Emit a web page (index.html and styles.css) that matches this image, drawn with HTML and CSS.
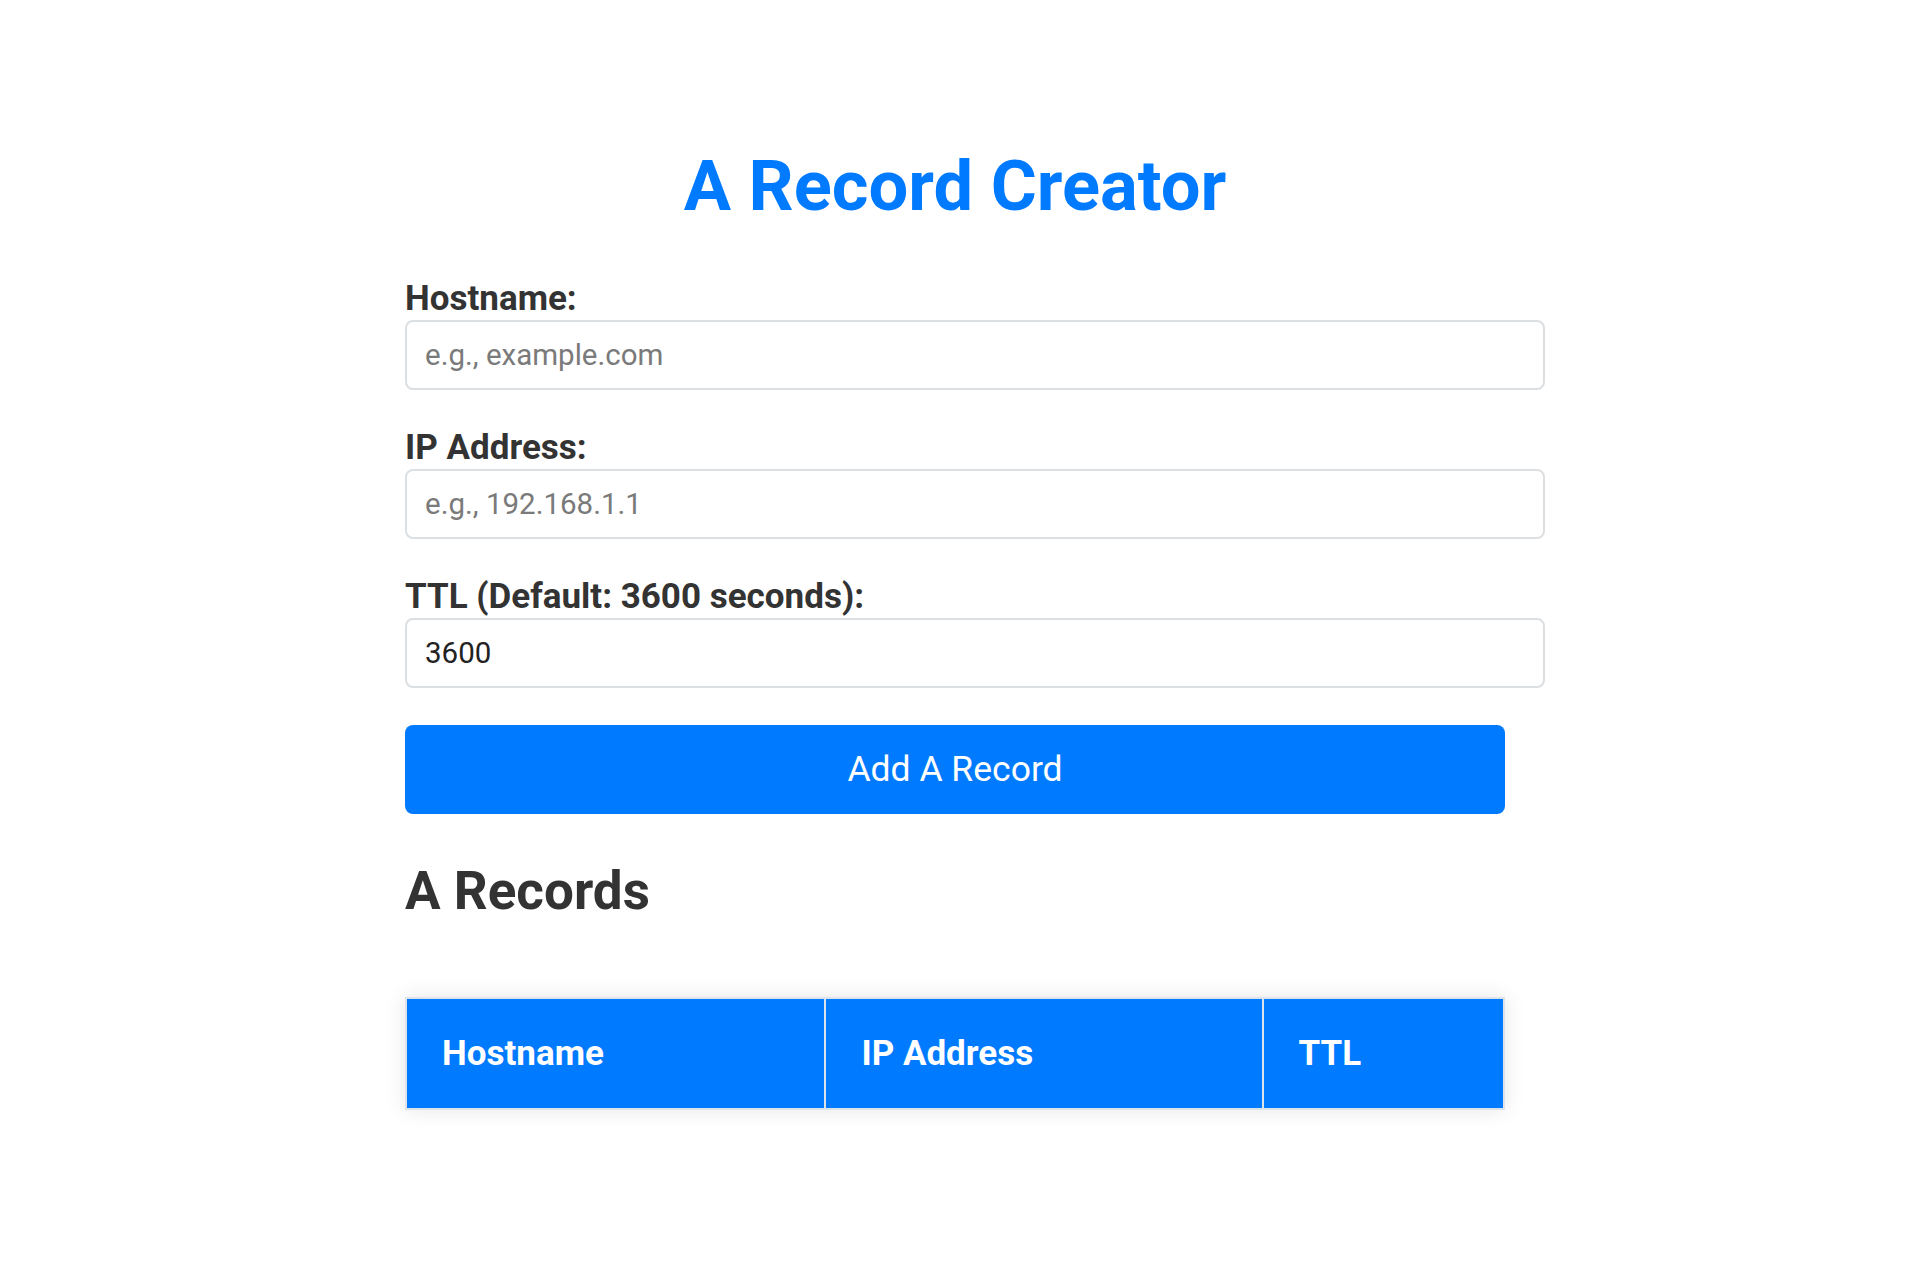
FILE: index.html
```html
<!DOCTYPE html>
<html lang="en">
<head>
<meta charset="utf-8">
<title>A Record Creator</title>
<link rel="stylesheet" href="styles.css">
</head>
<body>
<div class="container">
  <h1 class="title">A Record Creator</h1>
  <form class="record-form">
    <label class="field-label" for="hostname">Hostname:</label>
    <input class="field-input" type="text" id="hostname" placeholder="e.g., example.com">
    <label class="field-label" for="ip">IP Address:</label>
    <input class="field-input" type="text" id="ip" placeholder="e.g., 192.168.1.1">
    <label class="field-label" for="ttl">TTL (Default: 3600 seconds):</label>
    <input class="field-input field-last" type="number" id="ttl" value="3600">
    <button class="add-btn" type="button">Add A Record</button>
  </form>
  <h2 class="section-title">A Records</h2>
  <table class="records-table">
    <thead>
      <tr>
        <th>Hostname</th>
        <th>IP Address</th>
        <th>TTL</th>
      </tr>
    </thead>
    <tbody></tbody>
  </table>
</div>
</body>
</html>
```
FILE: styles.css
```css
html, body {
  margin: 0;
  padding: 0;
  background: #ffffff;
}

body {
  font-family: Roboto, "Liberation Sans", Arial, sans-serif;
  color: #333333;
}

.container {
  width: 1100px;
  margin-left: calc(50% - 555px);
  padding-top: 145px;
  padding-bottom: 60px;
}

.title {
  margin: 0 0 48px;
  font-size: 70.5px;
  line-height: 83px;
  font-weight: 700;
  text-align: center;
  color: #007bff;
}

.record-form {
  margin: 0;
}

.field-label {
  display: block;
  padding-top: 2px;
  font-size: 35px;
  line-height: 42px;
  font-weight: 700;
  color: #333333;
  margin: 0;
}

.field-input {
  display: block;
  width: 100%;
  margin: 0 0 35px;
  padding: 15.5px 18px;
  border: 2px solid #dcdfe2;
  border-radius: 8px;
  font-family: Roboto, "Liberation Sans", Arial, sans-serif;
  font-size: 29.5px;
  line-height: 35px;
  height: 35px;
  color: #222222;
  background: #ffffff;
  outline: none;
  -moz-appearance: textfield;
}

.field-input::-webkit-outer-spin-button,
.field-input::-webkit-inner-spin-button {
  -webkit-appearance: none;
  margin: 0;
}

.field-input::placeholder {
  color: #7a7a7a;
}

.field-last {
  margin-bottom: 37px;
}

.add-btn {
  display: block;
  width: 100%;
  margin: 0;
  padding: 24px 0;
  border: none;
  border-radius: 8px;
  background: #007bff;
  color: #ffffff;
  font-family: Roboto, "Liberation Sans", Arial, sans-serif;
  font-size: 35.5px;
  line-height: 41px;
  font-weight: 400;
  cursor: pointer;
}

.section-title {
  margin: 46px 0 0;
  font-size: 53px;
  line-height: 62.5px;
  font-weight: 700;
  color: #333333;
}

.records-table {
  width: 100%;
  margin-top: 74px;
  border-collapse: collapse;
  box-shadow: 0 0 20px rgba(0, 0, 0, 0.1);
}

.records-table th {
  padding: 34px 35px;
  border: 2px solid #dde3ea;
  background: #007bff;
  color: #ffffff;
  font-size: 35px;
  line-height: 41px;
  font-weight: 700;
  text-align: left;
}
```
